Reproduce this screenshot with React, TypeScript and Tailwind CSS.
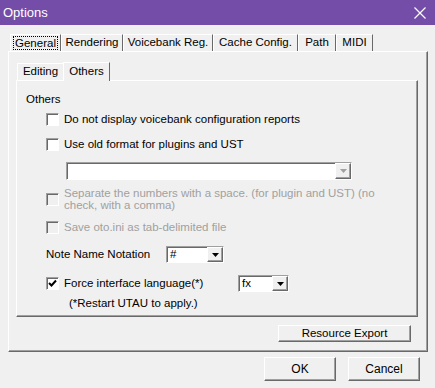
import type { ReactNode } from 'react';

const raised =
  'border border-t-white border-l-white border-r-[#696969] border-b-[#696969] shadow-[inset_-1px_-1px_0_#A0A0A0]';
const sunken =
  'border border-t-[#A0A0A0] border-l-[#A0A0A0] border-r-white border-b-white shadow-[inset_1px_1px_0_#696969]';

function Check({ checked, disabled }: { checked?: boolean; disabled?: boolean }) {
  return (
    <div className={`w-[13px] h-[13px] shrink-0 flex items-center justify-center ${sunken} ${disabled ? 'bg-[#F0F0F0]' : 'bg-white'}`}>
      {checked && (
        <svg width="9" height="9" viewBox="0 0 9 9">
          <path d="M1 4 L3.5 6.5 L8 1.5" stroke="#000" strokeWidth="2" fill="none" />
        </svg>
      )}
    </div>
  );
}

function Arrow({ disabled }: { disabled?: boolean }) {
  return (
    <div className={`w-[16px] h-full shrink-0 flex items-center justify-center bg-[#F0F0F0] ${raised}`}>
      <svg width="7" height="4" viewBox="0 0 7 4">
        <path d="M0 0 H7 L3.5 4 Z" fill={disabled ? '#A0A0A0' : '#000'} />
      </svg>
    </div>
  );
}

function Combo({ value, width, disabled, className = '' }: { value?: string; width: string; disabled?: boolean; className?: string }) {
  return (
    <div className={`${width} h-[17px] flex bg-white ${sunken} ${className}`}>
      <div className="flex-1 pl-[3px] leading-[15px]">{value}</div>
      <Arrow disabled={disabled} />
    </div>
  );
}

function Tab({ w, children, active }: { w: string; children: ReactNode; active?: boolean }) {
  return (
    <div className={`${w} h-[17px] flex items-center justify-center border-t border-l border-r border-t-white border-l-white border-r-[#696969] ${active ? 'relative z-10' : ''}`}>
      {children}
    </div>
  );
}

export default function App() {
  return (
    <div className="w-[435px] h-[388px] bg-[#F0F0F0] overflow-hidden font-['Liberation_Sans',sans-serif] text-[11.5px] text-black">
      <div className="h-[25px] bg-[#744DA9] flex items-center justify-between pl-[3px] pr-[9px]">
        <span className="text-white text-[13px]">Options</span>
        <svg width="12" height="12" viewBox="0 0 12 12">
          <path d="M0.5 0.5 L11.5 11.5 M11.5 0.5 L0.5 11.5" stroke="#fff" strokeWidth="1.2" />
        </svg>
      </div>

      <div className="pl-[8px] pt-[9px]">
        <div className="flex ml-[2px]">
          <Tab w="w-[51px]" active>
            <span className="border border-dotted border-black px-[1px] leading-[12px]">General</span>
          </Tab>
          <Tab w="w-[62px]">Rendering</Tab>
          <Tab w="w-[90px]">Voicebank Reg.</Tab>
          <Tab w="w-[85px]">Cache Config.</Tab>
          <Tab w="w-[38px]">Path</Tab>
          <Tab w="w-[37px]">MIDI</Tab>
        </div>

        <div className={`w-[420px] h-[301px] flex flex-col pl-[7px] pt-[9px] ${raised}`}>
          <div className="flex items-end ml-[1px] h-[19px]">
            <div className="w-[46px] h-[17px] flex items-center justify-center border-t border-l border-t-white border-l-white">Editing</div>
            <div className="w-[47px] h-[19px] flex items-center justify-center border-t border-l border-r border-t-white border-l-white border-r-[#696969] -mb-[1px] relative z-10 bg-[#F0F0F0]">Others</div>
          </div>

          <div className={`w-[402px] h-[237px] pl-[9px] pt-[12px] ${raised}`}>
            <div className="leading-[13px]">Others</div>
            <div className="pl-[20px]">
              <div className="mt-[7px] h-[13px] flex items-center gap-[5px]">
                <Check />
                <span>Do not display voicebank configuration reports</span>
              </div>
              <div className="mt-[12px] h-[13px] flex items-center gap-[5px]">
                <Check />
                <span>Use old format for plugins and UST</span>
              </div>
              <Combo width="w-[286px]" disabled className="mt-[11px] ml-[20px] h-[18px]" />
              <div className="mt-[7px] flex items-start gap-[5px] text-[#A0A0A0]">
                <div className="mt-[6px]">
                  <Check disabled />
                </div>
                <span className="leading-[12px]">
                  Separate the numbers with a space. (for plugin and UST) (no
                  <br />
                  check, with a comma)
                </span>
              </div>
              <div className="mt-[10px] h-[13px] flex items-center gap-[5px] text-[#A0A0A0]">
                <Check disabled />
                <span>Save oto.ini as tab-delimited file</span>
              </div>
              <div className="mt-[12px] h-[17px] flex items-center">
                <span className="w-[120px]">Note Name Notation</span>
                <Combo value="#" width="w-[58px]" />
              </div>
              <div className="mt-[12px] h-[17px] flex items-center">
                <div className="w-[192px] flex items-center gap-[5px]">
                  <Check checked />
                  <span>Force interface language(*)</span>
                </div>
                <Combo value="fx" width="w-[51px]" />
              </div>
              <div className="mt-[5px] pl-[23px] leading-[13px]">(*Restart UTAU to apply.)</div>
            </div>
          </div>

          <div className="flex justify-end pr-[16px] mt-[8px]">
            <div className={`w-[133px] h-[17px] flex items-center justify-center ${raised}`}>Resource Export</div>
          </div>
        </div>
      </div>

      <div className="flex justify-end gap-[12px] pr-[15px] mt-[5px]">
        <div className={`w-[72px] h-[24px] flex items-center justify-center text-[12px] ${raised}`}>OK</div>
        <div className={`w-[72px] h-[24px] flex items-center justify-center text-[12px] ${raised}`}>Cancel</div>
      </div>
    </div>
  );
}
